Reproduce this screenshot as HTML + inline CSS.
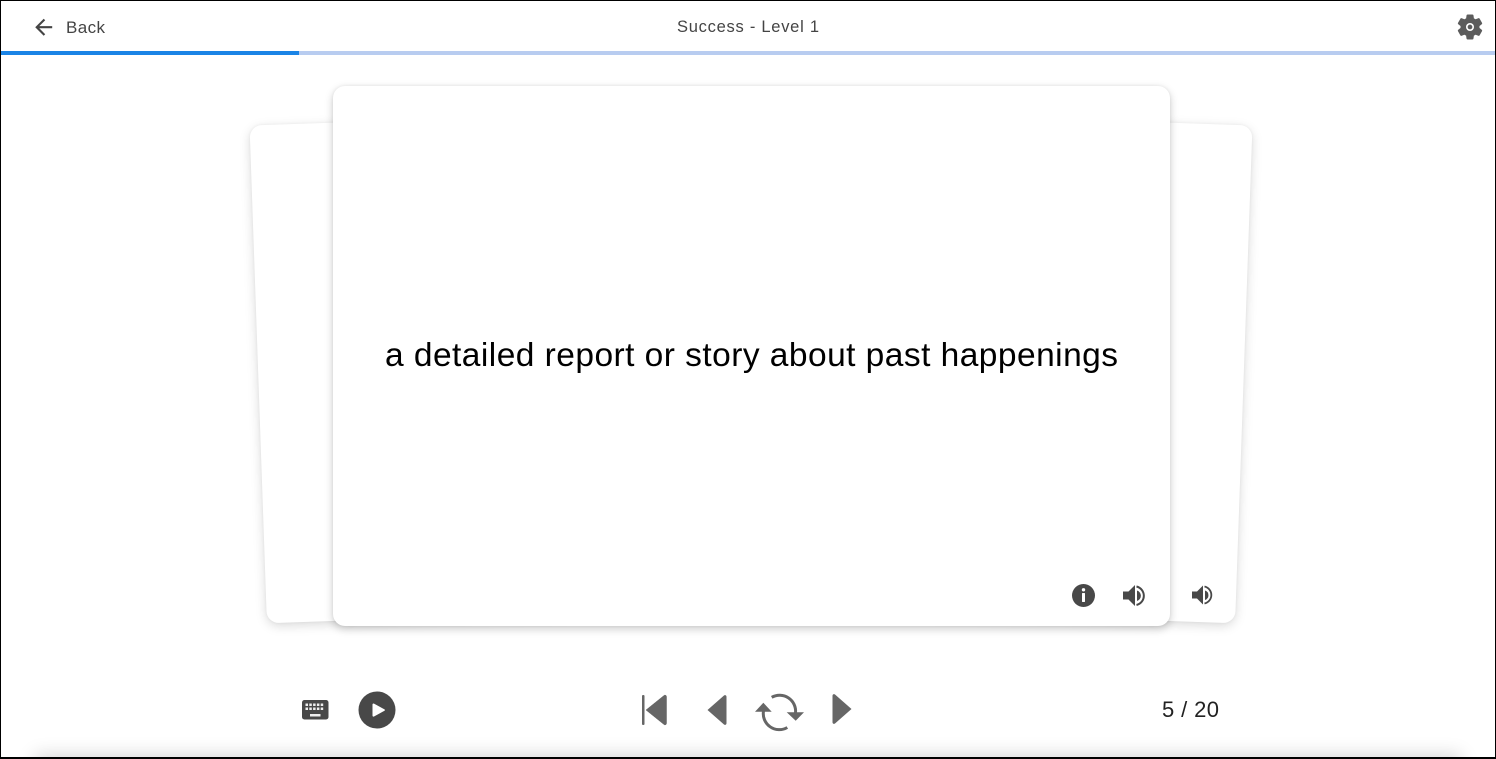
<!DOCTYPE html>
<html lang="en">
<head>
<meta charset="utf-8">
<title>Success - Level 1</title>
<style>
html,body{margin:0;padding:0;background:#fff;width:1496px;height:759px;overflow:hidden;}
#wrap{position:absolute;left:0;top:0;width:1496px;height:759px;overflow:hidden;background:#fff;font-family:"Liberation Sans",sans-serif;}
.bar{position:absolute;left:1px;top:51px;height:4px;}
.card{position:absolute;background:#fff;border-radius:12px;box-sizing:border-box;}
.back{left:257.5px;top:111.5px;width:770px;height:498px;box-shadow:0 3px 11px rgba(0,0,0,.15),0 0 3px rgba(0,0,0,.05);}
.main{left:333px;top:86px;width:837px;height:540px;box-shadow:0 3px 9px rgba(0,0,0,.2),0 0 3px rgba(0,0,0,.07);}
.foot{position:absolute;left:40px;right:40px;top:760px;height:30px;box-shadow:0 0 18px 5px rgba(0,0,0,.17);background:#ddd;}
.frame{position:absolute;left:0;top:0;width:1496px;height:759px;box-sizing:border-box;border:1px solid #000;border-bottom-width:2px;pointer-events:none;}
svg{position:absolute;left:0;top:0;}
</style>
</head>
<body>
<div id="wrap">
<div class="bar" style="width:1494px;background:#b8ccf0"></div>
<div class="bar" style="width:298px;background:#1a84e6"></div>
<div class="card back" style="transform:rotate(-2deg)"></div>
<div class="card back" style="left:474px;transform:rotate(2deg)"></div>
<div class="card main"></div>
<div class="foot"></div>
<svg width="1496" height="759" viewBox="0 0 1496 759" xmlns="http://www.w3.org/2000/svg">
  <g font-family="'Liberation Sans',sans-serif">
    <text x="66" y="33" font-size="17" fill="#444" textLength="39" lengthAdjust="spacing">Back</text>
    <text x="677" y="32" font-size="16.5" fill="#444" textLength="142" lengthAdjust="spacing">Success - Level 1</text>
    <text x="385" y="366" font-size="33.5" fill="#000" textLength="733" lengthAdjust="spacing">a detailed report or story about past happenings</text>
    <text x="1162" y="717" font-size="22" fill="#222" textLength="57" lengthAdjust="spacing">5 / 20</text>
  </g>

  <!-- back arrow -->
  <path transform="translate(31,14.500) scale(1.06)" fill="#444" d="M20 11H7.83l5.59-5.59L12 4l-8 8 8 8 1.41-1.41L7.83 13H20v-2z"/>

  <!-- settings -->
  <g transform="translate(1455,12) scale(1.25)">
    <path fill="#5c5c5c" d="M19.14 12.94c.04-.3.06-.61.06-.94 0-.32-.02-.64-.07-.94l2.03-1.58c.18-.14.23-.41.12-.61l-1.92-3.32c-.12-.22-.37-.29-.59-.22l-2.39.96c-.5-.38-1.03-.7-1.62-.94l-.36-2.54c-.04-.24-.24-.41-.48-.41h-3.84c-.24 0-.43.17-.47.41l-.36 2.54c-.59.24-1.13.57-1.62.94l-2.39-.96c-.22-.08-.47 0-.59.22L2.74 8.87c-.12.21-.08.47.12.61l2.03 1.58c-.05.3-.09.63-.09.94s.02.64.07.94l-2.03 1.58c-.18.14-.23.41-.12.61l1.92 3.32c.12.22.37.29.59.22l2.39-.96c.5.38 1.03.7 1.62.94l.36 2.54c.05.24.24.41.48.41h3.84c.24 0 .44-.17.47-.41l.36-2.54c.59-.24 1.13-.56 1.62-.94l2.39.96c.22.08.47 0 .59-.22l1.92-3.32c.12-.22.07-.47-.12-.61l-2.01-1.58z" stroke="#5c5c5c" stroke-width=".8" stroke-linejoin="round"/>
    <circle cx="12" cy="12" r="3.2" fill="#fff"/>
    <circle cx="12" cy="12" r="1.9" fill="#5c5c5c"/>
  </g>

  <!-- info -->
  <circle cx="1083.500" cy="595.500" r="11.500" fill="#484848"/>
  <rect x="1082" y="593" width="3" height="9" rx=".6" fill="#fff"/>
  <circle cx="1083.500" cy="589.800" r="1.700" fill="#fff"/>

  <!-- volume main -->
  <g fill="#484848">
    <path d="M1123 591.500h5.500l6.500-6.500v21l-6.500-6.500h-5.500z"/>
    <path d="M1137 590.500a5.500 5.500 0 0 1 0 10.500z"/>
  </g>
  <path d="M1136.500 586.500a9.500 9.500 0 0 1 0 18.500" fill="none" stroke="#484848" stroke-width="2"/>

  <!-- volume back -->
  <g fill="#484848">
    <path d="M1192 591.500h5l6-6v19l-6-6h-5z"/>
    <path d="M1205 590.500a5 5 0 0 1 0 9.500z"/>
  </g>
  <path d="M1204.500 586.500a8.700 8.700 0 0 1 0 17" fill="none" stroke="#484848" stroke-width="1.800"/>

  <!-- keyboard -->
  <rect x="302" y="700" width="26.500" height="19.500" rx="2.500" fill="#484848"/>
  <g fill="#eee">
    <rect x="305.500" y="703.500" width="2.500" height="2.500"/><rect x="309.300" y="703.500" width="2.500" height="2.500"/><rect x="313.100" y="703.500" width="2.500" height="2.500"/><rect x="316.900" y="703.500" width="2.500" height="2.500"/><rect x="320.700" y="703.500" width="2.500" height="2.500"/>
    <rect x="305.500" y="707.500" width="2.500" height="2.500"/><rect x="309.300" y="707.500" width="2.500" height="2.500"/><rect x="313.100" y="707.500" width="2.500" height="2.500"/><rect x="316.900" y="707.500" width="2.500" height="2.500"/><rect x="320.700" y="707.500" width="2.500" height="2.500"/>
    <rect x="310" y="714" width="10.500" height="2.500"/>
  </g>

  <!-- play -->
  <circle cx="377" cy="710" r="18.500" fill="#484848"/>
  <path d="M372.500 704.500a1 1 0 0 1 1.500-.9l10.500 5.800a.8.8 0 0 1 0 1.300l-10.500 5.800a1 1 0 0 1-1.500-.9z" fill="#fff"/>

  <g fill="#666">
    <!-- first -->
    <rect x="642" y="695" width="2.500" height="30" rx="1"/>
    <path d="M646 710l18-14.500a1.500 1.500 0 0 1 2.500 1.200v26.600a1.500 1.500 0 0 1-2.500 1.200z" stroke="#666" stroke-width=".5" stroke-linejoin="round"/>
    <!-- prev -->
    <path d="M707.500 710l16.500-14.500a1.500 1.500 0 0 1 2.500 1.200v26.600a1.500 1.500 0 0 1-2.500 1.200z"/>
    <!-- next -->
    <path d="M851.500 709l-16.500-14.500a1.500 1.500 0 0 0-2.500 1.200v26.600a1.500 1.500 0 0 0 2.500 1.200z"/>
    <!-- refresh arrows -->
    <path d="M755 711.700h16.700l-8.350-9z"/>
    <path d="M786.700 712.300h17.300l-8.300 8.400z"/>
  </g>
  <path d="M771.700 697.300A16 16 0 0 1 795.500 713" fill="none" stroke="#666" stroke-width="3"/>
  <path d="M763.500 711A16 16 0 0 0 787.300 727.500" fill="none" stroke="#666" stroke-width="3"/>
</svg>
<div class="frame"></div>
</div>
</body>
</html>
